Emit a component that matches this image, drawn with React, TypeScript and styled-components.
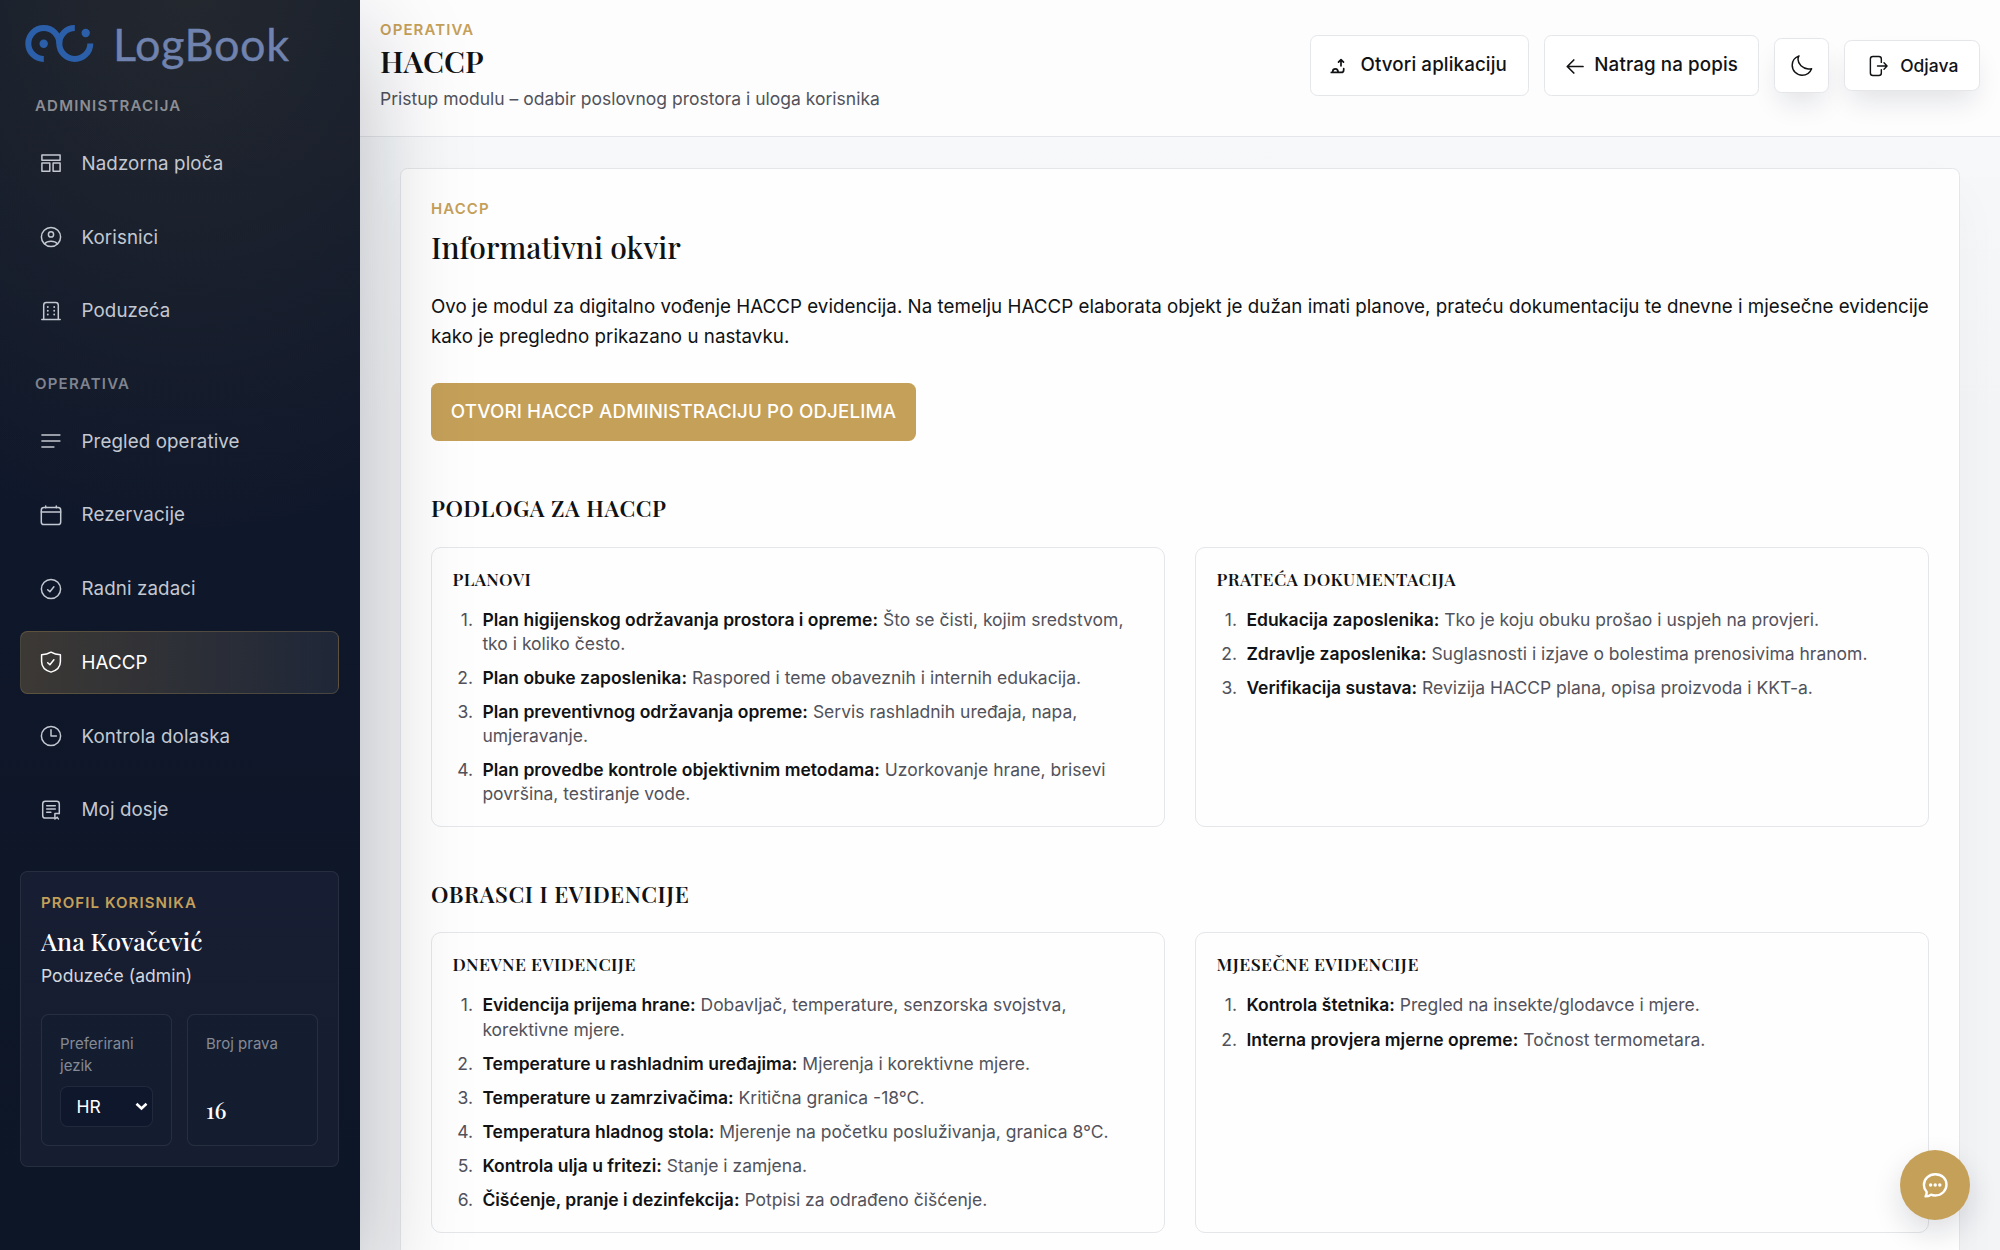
import React from 'react';
import styled, { createGlobalStyle, css } from 'styled-components';

const GOLD = '#c5a059';
const LINE = '#e4e6e9';
const INK = '#111214';
const MUTED = '#52525b';
const SANS = `Inter, 'Liberation Sans', sans-serif`;
const SERIF = `'Playfair Display', 'Liberation Serif', serif`;

const GlobalStyle = createGlobalStyle`
  *, *::before, *::after { box-sizing: border-box; }
  html, body { margin: 0; padding: 0; }
  body { font-family: ${SANS}; color: ${INK}; background: #f3f4f6; overflow: hidden; }
  h1, h2, h3, h4, p, ol { margin: 0; padding: 0; }
`;

const Page = styled.div`
  display: flex;
  width: 2000px;
  height: 1250px;
  overflow: hidden;
  background: linear-gradient(180deg, #f6f8f9 130px, #f3f4f6 420px);
`;

/* ---------- sidebar ---------- */

const Sidebar = styled.aside`
  position: relative;
  z-index: 2;
  flex: 0 0 360px;
  height: 1250px;
  padding: 0 21px 0 20px;
  display: flex;
  flex-direction: column;
  background:
    radial-gradient(ellipse 480px 540px at 52% 0, rgba(197, 160, 89, 0.1), rgba(197, 160, 89, 0)),
    linear-gradient(180deg, #111a2a 0%, #0f172a 45%, #0d1626 100%);
  box-shadow: 0 37px 100px rgba(10, 16, 32, 0.27);
`;

const Brand = styled.div`
  display: flex;
  align-items: center;
  height: 88px;
  padding-left: 4px;
`;

const BrandMark = styled.svg`
  width: 72px;
  height: 40px;
  flex: none;
`;

const BrandName = styled.span`
  margin-left: 17px;
  font-family: Lato, ${SANS};
  font-size: 45px;
  line-height: 60px;
  letter-spacing: 0.6px;
  color: #7082ae;
  -webkit-text-stroke: 0.4px #7082ae;
`;

const GroupLabel = styled.div<{ $first?: boolean }>`
  height: 20px;
  margin: ${p => (p.$first ? '8px 0 15.5px' : '31px 0 15.5px')};
  padding-left: 15px;
  line-height: 20px;
  font-size: 15px;
  font-weight: 600;
  letter-spacing: 1.2px;
  color: ${p => (p.$first ? '#8d8e93' : '#7f8490')};
`;

const Nav = styled.nav`
  display: flex;
  flex-direction: column;
  gap: 10px;
`;

const NavItem = styled.a<{ $active?: boolean }>`
  display: flex;
  align-items: center;
  height: 63.75px;
  padding-left: 18px;
  border: 1px solid transparent;
  border-radius: 7.5px;
  font-size: 18.75px;
  letter-spacing: 0.1px;
  color: #c3c8d1;
  ${p => p.$active && css`
    color: #fff;
    border-color: rgba(197, 160, 89, 0.25);
    background: linear-gradient(90deg, rgba(197, 160, 89, 0.25), rgba(255, 255, 255, 0.07));
  `}
`;

const NavIcon = styled.svg`
  width: 24px;
  height: 24px;
  margin-right: 18.5px;
  flex: none;
  fill: none;
  stroke: currentColor;
  stroke-width: 1.5;
  stroke-linecap: round;
  stroke-linejoin: round;
`;

const Profile = styled.section`
  margin-top: 29.5px;
  height: 296px;
  padding: 20.5px 20px 20px;
  border: 1px solid rgba(255, 255, 255, 0.07);
  border-radius: 7.5px;
  background: rgba(60, 60, 88, 0.2);
`;

const ProfileLabel = styled.div`
  line-height: 20px;
  font-size: 15px;
  font-weight: 600;
  letter-spacing: 1.1px;
  color: ${GOLD};
`;

const ProfileName = styled.div`
  margin-top: 11.5px;
  line-height: 34px;
  font-family: ${SERIF};
  font-size: 25px;
  font-weight: 500;
  color: #fff;
`;

const ProfileRole = styled.div`
  margin-top: 5px;
  line-height: 26px;
  font-size: 17.5px;
  letter-spacing: 0.04px;
  color: #d3d7de;
`;

const Stats = styled.div`
  display: grid;
  grid-template-columns: 1fr 1fr;
  gap: 15px;
  margin-top: 25px;
`;

const Stat = styled.div`
  height: 131.5px;
  padding: 17.5px 18px;
  display: flex;
  flex-direction: column;
  justify-content: space-between;
  border: 1px solid rgba(255, 255, 255, 0.08);
  border-radius: 7.5px;
  background: rgba(18, 30, 46, 0.6);
`;

const StatLabel = styled.div`
  line-height: 22.5px;
  font-size: 15px;
  color: #858a96;
`;

const Picker = styled.div`
  display: flex;
  align-items: center;
  justify-content: space-between;
  height: 41px;
  padding: 0 4px 0 15.5px;
  border: 1px solid rgba(255, 255, 255, 0.08);
  border-radius: 7.5px;
  background: #0f172c;
  font-size: 17.5px;
  color: #fff;
`;

const StatNumber = styled.div`
  margin-bottom: 4px;
  line-height: 26px;
  font-family: ${SERIF};
  font-size: 22.5px;
  font-weight: 500;
  color: #fff;
`;

/* ---------- main column ---------- */

const Main = styled.main`
  flex: 1;
  min-width: 0;
  display: flex;
  flex-direction: column;
`;

const Header = styled.header`
  flex: none;
  display: flex;
  justify-content: space-between;
  height: 137px;
  padding: 18.5px 20px 0;
  border-bottom: 1px solid ${LINE};
  background: #fdfdfe;
`;

const Eyebrow = styled.div`
  line-height: 22.5px;
  font-size: 15px;
  font-weight: 600;
  letter-spacing: 1.1px;
  color: ${GOLD};
`;

const PageTitle = styled.h1`
  line-height: 40px;
  font-family: ${SERIF};
  font-size: 30px;
  font-weight: 600;
`;

const PageSub = styled.p`
  margin-top: 5px;
  line-height: 26px;
  font-size: 17.5px;
  color: ${MUTED};
`;

const Actions = styled.div`
  display: flex;
  align-items: center;
  gap: 15.2px;
  height: 94px;
`;

const ActionButton = styled.button<{ $w: number; $h: number; $raised?: boolean; $inset?: number }>`
  display: flex;
  align-items: center;
  justify-content: ${p => (p.$inset ? 'flex-start' : 'center')};
  width: ${p => p.$w}px;
  height: ${p => p.$h}px;
  padding: 0 0 0 ${p => p.$inset ?? 0}px;
  border: 1px solid ${LINE};
  border-radius: 7.5px;
  background: #fff;
  font-family: ${SANS};
  font-size: ${p => (p.$raised ? 17.5 : 18.75)}px;
  font-weight: 500;
  letter-spacing: ${p => (p.$raised ? 0 : 0.12)}px;
  white-space: nowrap;
  color: ${INK};
  box-shadow: ${p => (p.$raised ? '0 15px 28px -6px rgba(15, 23, 42, 0.12)' : 'none')};
`;

const ActionIcon = styled.svg<{ $gap?: number }>`
  width: 24px;
  height: 24px;
  margin-right: ${p => p.$gap ?? 0}px;
  flex: none;
  fill: none;
  stroke: currentColor;
  stroke-width: 1.5;
  stroke-linecap: round;
  stroke-linejoin: round;
`;

const ActionText = styled.span`
  padding-bottom: 2px;
`;

const Content = styled.div`
  flex: 1;
  min-height: 0;
  padding: 31px 40px 0;
`;

const Panel = styled.section`
  height: 1200px;
  padding: 29px 30px;
  border: 1px solid ${LINE};
  border-radius: 7.5px;
  background: #fefefe;
  box-shadow: 0 25px 50px rgba(15, 23, 42, 0.03);
`;

const PanelTitle = styled.h2`
  margin-top: 6px;
  line-height: 40px;
  font-family: ${SERIF};
  font-size: 30px;
  font-weight: 500;
`;

const Lead = styled.p`
  margin-top: 25px;
  line-height: 30px;
  font-size: 18.75px;
  letter-spacing: 0.02px;
`;

const PrimaryButton = styled.button`
  display: flex;
  align-items: center;
  justify-content: center;
  width: 485px;
  height: 58.5px;
  margin-top: 31px;
  padding: 0 0 1px;
  border: 0;
  border-radius: 7.5px;
  background: ${GOLD};
  font-family: ${SANS};
  font-size: 18.75px;
  font-weight: 500;
  letter-spacing: 0.14px;
  white-space: nowrap;
  color: #fff;
`;

const SectionTitle = styled.h3`
  margin-top: 51px;
  line-height: 33px;
  font-family: ${SERIF};
  font-size: 22.5px;
  font-weight: 600;
  letter-spacing: 0.56px;
`;

const Grid = styled.div`
  display: grid;
  grid-template-columns: 1fr 1fr;
  gap: 30px;
  margin-top: 21.5px;
`;

const Card = styled.article`
  padding: 20px;
  border: 1px solid ${LINE};
  border-radius: 10px;
  background: #fefefe;
`;

const CardTitle = styled.h4`
  margin-bottom: 18px;
  padding-left: 0.5px;
  line-height: 22px;
  font-family: ${SERIF};
  font-size: 17.5px;
  font-weight: 600;
  letter-spacing: 0.4px;
`;

const List = styled.ol`
  display: flex;
  flex-direction: column;
  gap: 10px;
  padding-right: 20px;
  list-style: none;
  line-height: 24.06px;
  font-size: 17.5px;
  color: ${MUTED};
`;

const Item = styled.li`
  display: grid;
  grid-template-columns: 21px 1fr;
  column-gap: 9.4px;
`;

const Ordinal = styled.span`
  text-align: right;
`;

const Term = styled.strong`
  font-weight: 600;
  color: ${INK};
`;

const Chat = styled.button`
  position: absolute;
  left: 1900px;
  top: 1150px;
  z-index: 3;
  display: flex;
  align-items: center;
  justify-content: center;
  width: 70px;
  height: 70px;
  padding: 0;
  border: 0;
  border-radius: 50%;
  background: ${GOLD};
  box-shadow: 0 12px 30px rgba(15, 23, 42, 0.14);
`;

const icons: Record<string, React.ReactNode> = {
  board: (
    <>
      <rect x="2.9" y="4" width="18.2" height="5.3" />
      <rect x="2.9" y="12" width="7.9" height="8.2" />
      <rect x="14.1" y="12" width="7" height="8.2" />
    </>
  ),
  user: (
    <>
      <circle cx="12" cy="12" r="9.6" />
      <circle cx="12" cy="9.4" r="2.6" />
      <path d="M5.6 18.8c1.6-1.9 3.8-2.6 6.4-2.6s4.8.7 6.4 2.6" />
    </>
  ),
  building: (
    <>
      <path d="M2.8 20.6h18.4M4.7 20.6V6.2c0-1.6 1-2.6 2.6-2.6h9.4c1.6 0 2.6 1 2.6 2.6v14.4" />
      <path d="M8.8 8v8M15.2 8v8" strokeDasharray=".1 3.6" strokeWidth="1.9" />
    </>
  ),
  lines: <path d="M2.9 6h18M2.9 12.1h18M2.9 18h12" />,
  calendar: (
    <>
      <rect x="2.3" y="4.6" width="19.4" height="17" rx="2.6" />
      <path d="M2.3 9.1h19.4M6.7 2.9v1.8M17.3 2.9v1.8" />
    </>
  ),
  check: (
    <>
      <circle cx="12" cy="12" r="9.6" />
      <path d="M8.7 12.7l2.2 2.1 4-5" />
    </>
  ),
  shield: (
    <>
      <path d="M12 2.2c2.8 1.7 5.8 2.5 9.4 2.6v6.7c0 5-3.6 9-9.4 10.6-5.8-1.6-9.4-5.6-9.4-10.6V4.8C6.2 4.7 9.2 3.9 12 2.2z" />
      <path d="M8.7 12.7l2.2 2.1 4-5" />
    </>
  ),
  clock: (
    <>
      <circle cx="12" cy="12" r="9.6" />
      <path d="M12 5.8v6.2h5.4" />
    </>
  ),
  file: (
    <>
      <path d="M15.2 20H6.3c-1.6 0-2.6-1-2.6-2.6V5.900c0-1.600 1-2.600 2.600-2.600h11.400c1.600 0 2.600 1 2.600 2.600v9.700" />
      <path d="M7.700 7.700h8.600M7.700 11h8.600M7.700 14.300h4.200M20.300 15.600h-4.400v5.400l2.200-1.700M18.100 19.300l1.300 1.600" />
    </>
  ),
};

const navGroups = [
  {
    title: 'ADMINISTRACIJA',
    items: [
      ['board', 'Nadzorna ploča'],
      ['user', 'Korisnici'],
      ['building', 'Poduzeća'],
    ],
  },
  {
    title: 'OPERATIVA',
    items: [
      ['lines', 'Pregled operative'],
      ['calendar', 'Rezervacije'],
      ['check', 'Radni zadaci'],
      ['shield', 'HACCP'],
      ['clock', 'Kontrola dolaska'],
      ['file', 'Moj dosje'],
    ],
  },
];

const sections = [
  {
    title: 'PODLOGA ZA HACCP',
    cards: [
      {
        title: 'PLANOVI',
        rows: [
          ['Plan higijenskog održavanja prostora i opreme:', 'Što se čisti, kojim sredstvom, tko i koliko često.'],
          ['Plan obuke zaposlenika:', 'Raspored i teme obaveznih i internih edukacija.'],
          ['Plan preventivnog održavanja opreme:', 'Servis rashladnih uređaja, napa, umjeravanje.'],
          ['Plan provedbe kontrole objektivnim metodama:', 'Uzorkovanje hrane, brisevi površina, testiranje vode.'],
        ],
      },
      {
        title: 'PRATEĆA DOKUMENTACIJA',
        rows: [
          ['Edukacija zaposlenika:', 'Tko je koju obuku prošao i uspjeh na provjeri.'],
          ['Zdravlje zaposlenika:', 'Suglasnosti i izjave o bolestima prenosivima hranom.'],
          ['Verifikacija sustava:', 'Revizija HACCP plana, opisa proizvoda i KKT-a.'],
        ],
      },
    ],
  },
  {
    title: 'OBRASCI I EVIDENCIJE',
    cards: [
      {
        title: 'DNEVNE EVIDENCIJE',
        rows: [
          ['Evidencija prijema hrane:', 'Dobavljač, temperature, senzorska svojstva, korektivne mjere.'],
          ['Temperature u rashladnim uređajima:', 'Mjerenja i korektivne mjere.'],
          ['Temperature u zamrzivačima:', 'Kritična granica -18°C.'],
          ['Temperatura hladnog stola:', 'Mjerenje na početku posluživanja, granica 8°C.'],
          ['Kontrola ulja u fritezi:', 'Stanje i zamjena.'],
          ['Čišćenje, pranje i dezinfekcija:', 'Potpisi za odrađeno čišćenje.'],
        ],
      },
      {
        title: 'MJESEČNE EVIDENCIJE',
        rows: [
          ['Kontrola štetnika:', 'Pregled na insekte/glodavce i mjere.'],
          ['Interna provjera mjerne opreme:', 'Točnost termometara.'],
        ],
      },
    ],
  },
];

export default function App() {
  return (
    <>
      <GlobalStyle />
      <Page>
        <Sidebar>
          <Brand>
            <BrandMark viewBox="0 0 72 40" fill="none" stroke="#2c5fa9" strokeWidth="6">
              <path d="M19.8 35A15.5 15.5 0 1 1 35.3 19.5A15.5 15.5 0 1 0 66.3 19.5" />
              <path d="M35.3 19.5A15.5 15.5 0 0 1 50.8 4" />
              <circle cx="19.7" cy="19.7" r="4.2" fill="#2c5fa9" stroke="none" />
              <circle cx="61.7" cy="9" r="4.2" fill="#2c5fa9" stroke="none" />
            </BrandMark>
            <BrandName>LogBook</BrandName>
          </Brand>
          {navGroups.map((group, i) => (
            <React.Fragment key={group.title}>
              <GroupLabel $first={i === 0}>{group.title}</GroupLabel>
              <Nav>
                {group.items.map(([icon, label]) => (
                  <NavItem key={label} $active={label === 'HACCP'}>
                    <NavIcon viewBox="0 0 24 24">{icons[icon]}</NavIcon>
                    {label}
                  </NavItem>
                ))}
              </Nav>
            </React.Fragment>
          ))}
          <Profile>
            <ProfileLabel>PROFIL KORISNIKA</ProfileLabel>
            <ProfileName>Ana Kovačević</ProfileName>
            <ProfileRole>Poduzeće (admin)</ProfileRole>
            <Stats>
              <Stat>
                <StatLabel>Preferirani jezik</StatLabel>
                <Picker>
                  HR
                  <svg width="13" height="9" viewBox="0 0 13 9" fill="none" stroke="#fff" strokeWidth="2.6">
                    <path d="M1.5 1.7l5 4.8 5-4.8" />
                  </svg>
                </Picker>
              </Stat>
              <Stat>
                <StatLabel>Broj prava</StatLabel>
                <StatNumber>16</StatNumber>
              </Stat>
            </Stats>
          </Profile>
        </Sidebar>

        <Main>
          <Header>
            <div>
              <Eyebrow>OPERATIVA</Eyebrow>
              <PageTitle>HACCP</PageTitle>
              <PageSub>Pristup modulu – odabir poslovnog prostora i uloga korisnika</PageSub>
            </div>
            <Actions>
              <ActionButton $w={218.5} $h={61} $inset={15}>
                <ActionIcon viewBox="0 0 24 24" $gap={10}>
                  <path
                    strokeWidth="1.7"
                    d="M5.3 18.4h6.4M6.8 17.2c0-1.6 1.1-2.4 2.700-2.400s2.500 1.200 2.800 3.600h2.900c1.700 0 2.500-.9 2.500-2.500v-1.400M15 11.800V5.800M12.500 8.100L15 5.600l2.500 2.500"
                  />
                </ActionIcon>
                <ActionText>Otvori aplikaciju</ActionText>
              </ActionButton>
              <ActionButton $w={215} $h={61} $inset={18}>
                <ActionIcon viewBox="0 0 24 24" $gap={7.2}>
                  <path d="M20 12.500H4.300M10.800 6l-6.500 6.500 6.500 6.500" strokeWidth="1.7" />
                </ActionIcon>
                <ActionText>Natrag na popis</ActionText>
              </ActionButton>
              <ActionButton $w={54.5} $h={54.5} $raised>
                <ActionIcon viewBox="0 0 24 24">
                  <path d="M9 1.900C5 3.400 2.200 7 2.200 11.300c0 5.500 4.400 9.900 9.900 9.900 4.300 0 8-2.700 9.500-6.500-1.200.3-2.300.4-3.400.2C12.600 14.400 8 10 8 5.300c0-1.200.3-2.300 1-3.400z" />
                </ActionIcon>
              </ActionButton>
              <ActionButton $w={136} $h={51.5} $raised>
                <ActionIcon viewBox="-0.6 -0.6 25.2 25.2" $gap={10.5}>
                  <path d="M15.500 8.200V4.600c0-1.600-1-2.600-2.600-2.600H6.600C5 2 4 3 4 4.600v14.800C4 21 5 22 6.600 22h6.300c1.600 0 2.600-1 2.600-2.600v-3.600M11.500 12h9.800M18.300 8.700l3.200 3.300-3.200 3.300" />
                </ActionIcon>
                Odjava
              </ActionButton>
            </Actions>
          </Header>

          <Content>
            <Panel>
              <Eyebrow>HACCP</Eyebrow>
              <PanelTitle>Informativni okvir</PanelTitle>
              <Lead>
                Ovo je modul za digitalno vođenje HACCP evidencija. Na temelju HACCP elaborata objekt je dužan imati
                planove, prateću dokumentaciju te dnevne i mjesečne evidencije kako je pregledno prikazano u nastavku.
              </Lead>
              <PrimaryButton>OTVORI HACCP ADMINISTRACIJU PO ODJELIMA</PrimaryButton>
              {sections.map(section => (
                <React.Fragment key={section.title}>
                  <SectionTitle>{section.title}</SectionTitle>
                  <Grid>
                    {section.cards.map(card => (
                      <Card key={card.title}>
                        <CardTitle>{card.title}</CardTitle>
                        <List>
                          {card.rows.map(([term, text], i) => (
                            <Item key={term}>
                              <Ordinal>{i + 1}.</Ordinal>
                              <div>
                                <Term>{term}</Term> {text}
                              </div>
                            </Item>
                          ))}
                        </List>
                      </Card>
                    ))}
                  </Grid>
                </React.Fragment>
              ))}
            </Panel>
          </Content>
        </Main>

        <Chat aria-label="Chat">
          <svg width="28" height="28" viewBox="0 0 28 28" fill="none" stroke="#fff" strokeWidth="2.4" strokeLinejoin="round">
            <path d="M14.300 3.200c6.400 0 11.200 4.500 11.200 10.400S20.700 24.500 14.300 24.500c-1.600 0-3-.2-4.300-.8-1.500 1-3.400 1.700-5.400 1.700.8-1.400 1.200-2.800 1.100-4.400C3.900 19 2.900 16.500 2.900 13.900 2.900 7.800 7.900 3.200 14.300 3.200z" />
            <g fill="#fff" stroke="none">
              <circle cx="9.6" cy="14" r="1.7" />
              <circle cx="14.2" cy="14" r="1.7" />
              <circle cx="18.8" cy="14" r="1.7" />
            </g>
          </svg>
        </Chat>
      </Page>
    </>
  );
}
